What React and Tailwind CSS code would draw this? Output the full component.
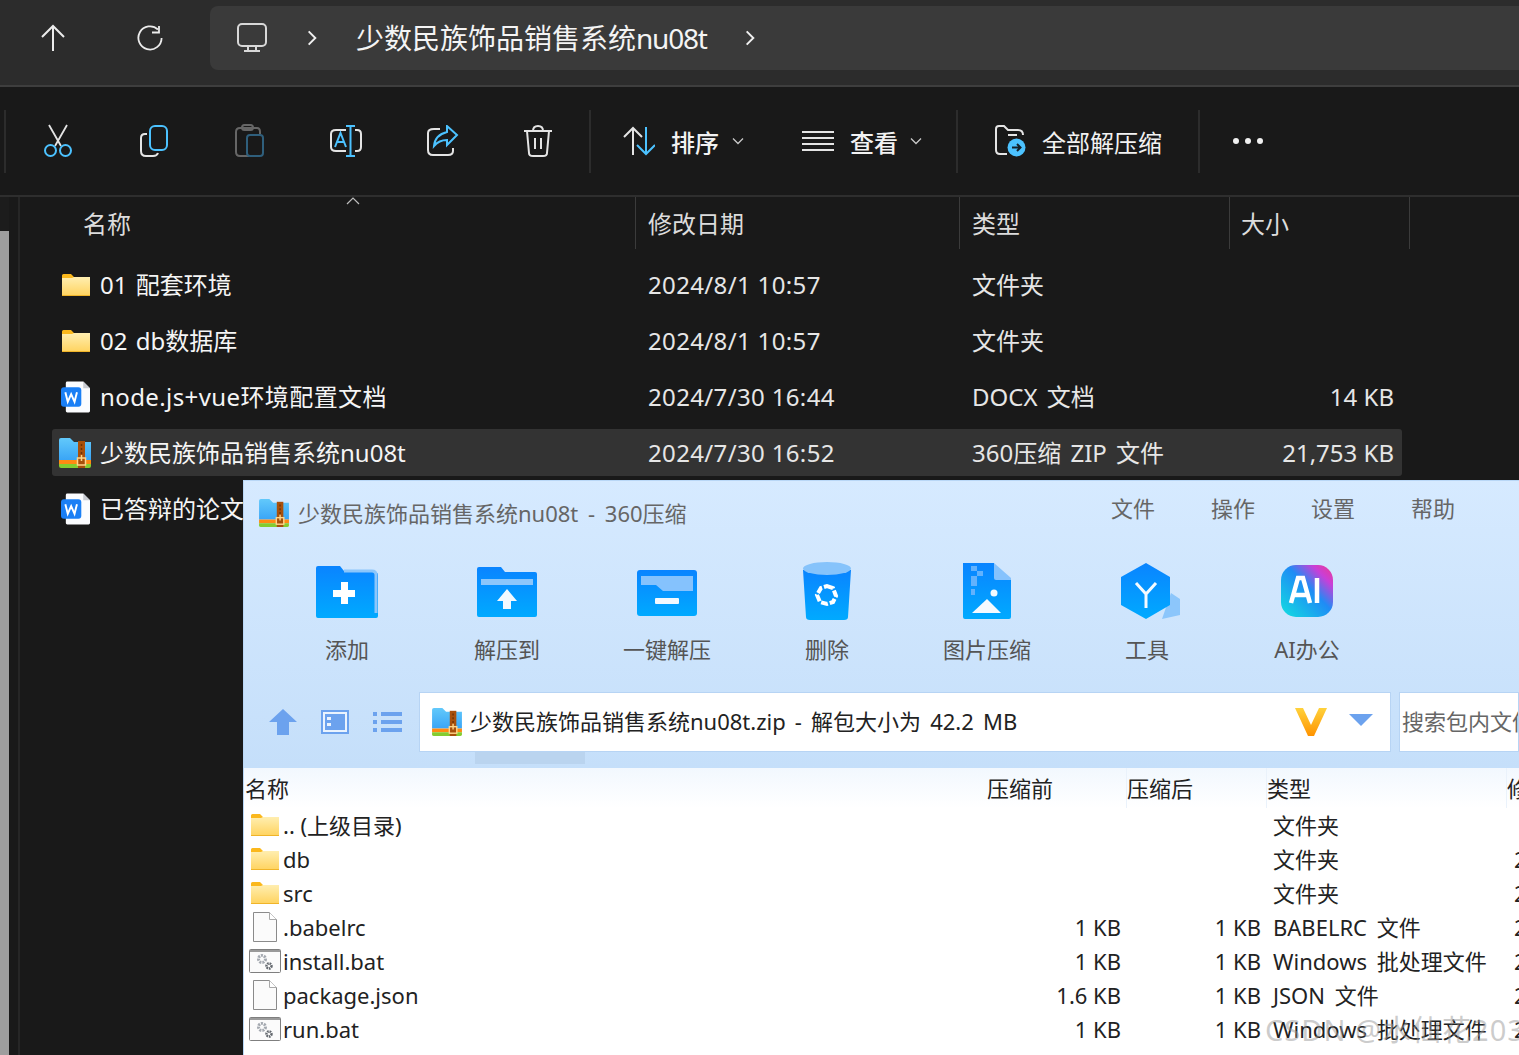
import React from 'react';

const FONT = "font-['Noto_Sans','Noto_Sans_CJK_SC',sans-serif]";
const BLUE = '#4cc2ff';
const GREY = '#e4e4e4';

const darkRows = [
  { icon: 'folder', name: '01 配套环境', date: '2024/8/1 10:57', type: '文件夹', size: '' },
  { icon: 'folder', name: '02 db数据库', date: '2024/8/1 10:57', type: '文件夹', size: '' },
  { icon: 'word', name: 'node.js+vue环境配置文档', date: '2024/7/30 16:44', type: 'DOCX 文档', size: '14 KB', nameClass: 'tracking-[0.4px]' },
  { icon: 'zip', name: '少数民族饰品销售系统nu08t', date: '2024/7/30 16:52', type: '360压缩 ZIP 文件', size: '21,753 KB', selected: true },
  { icon: 'word', name: '已答辩的论文', date: '', type: '', size: '' },
];

const zipRows = [
  { icon: 'folder', name: '.. (上级目录)', before: '', after: '', type: '文件夹', date: '' },
  { icon: 'folder', name: 'db', before: '', after: '', type: '文件夹', date: '2024/7/30' },
  { icon: 'folder', name: 'src', before: '', after: '', type: '文件夹', date: '2024/7/30' },
  { icon: 'file', name: '.babelrc', before: '1 KB', after: '1 KB', type: 'BABELRC 文件', date: '2024/7/30' },
  { icon: 'bat', name: 'install.bat', before: '1 KB', after: '1 KB', type: 'Windows 批处理文件', date: '2024/7/30' },
  { icon: 'file', name: 'package.json', before: '1.6 KB', after: '1 KB', type: 'JSON 文件', date: '2024/7/30' },
  { icon: 'bat', name: 'run.bat', before: '1 KB', after: '1 KB', type: 'Windows 批处理文件', date: '2024/7/30' },
];

function FolderIcon({ className }) {
  return (
    <svg viewBox="0 0 28 22" className={className}>
      <defs>
        <linearGradient id="fold" x1="0" y1="0" x2="0" y2="1">
          <stop offset="0" stopColor="#ffeeb0" />
          <stop offset="1" stopColor="#ffd35e" />
        </linearGradient>
      </defs>
      <path d="M0 1.500Q0 0 1.500 0H9l3 3h16v6H0z" fill="#fbb81c" />
      <path d="M0 4h10l2-1h16v18q0 1-1 1H1q-1 0-1-1z" fill="url(#fold)" />
      <rect y="21" width="28" height="1" fill="#f0b429" />
    </svg>
  );
}

function WordIcon({ className }) {
  return (
    <svg viewBox="0 0 30 32" className={className}>
      <path d="M5 1.500Q5 0 6.500 0H23l7 7v23.500q0 1.500-1.500 1.500h-22Q5 32 5 30.500z" fill="#fbfcfe" />
      <path d="M23 0l7 7h-7z" fill="#c9ccd2" />
      <rect y="6" width="21" height="20" rx="3" fill="#1a7ff5" />
      <path d="M4.500 11l2.500 10 3.500-8 3.500 8 2.500-10" fill="none" stroke="#fff" strokeWidth="2" />
    </svg>
  );
}

function ZipIcon({ className }) {
  return (
    <svg viewBox="0 0 32 30" className={className}>
      <defs>
        <linearGradient id="zipb" x1="0" y1="0" x2="0" y2="1">
          <stop offset="0" stopColor="#62c9fb" />
          <stop offset="1" stopColor="#3aa5f6" />
        </linearGradient>
      </defs>
      <path d="M0 2q0-2 2-2h9l4 4h17v18H0z" fill="url(#zipb)" />
      <rect y="22" width="32" height="4" fill="#ff8a12" />
      <path d="M0 26h32v2q0 2-2 2H2q-2 0-2-2z" fill="#84cc30" />
      <rect x="19" y="3" width="7" height="27" fill="#a8500b" />
      <path d="M22.500 6v12" stroke="#6e3206" strokeWidth="1.500" strokeDasharray="2 2" />
      <rect x="18.500" y="20" width="8" height="7" fill="none" stroke="#ffd58a" strokeWidth="1.500" />
      <path d="M22.500 17v6" stroke="#ffd58a" strokeWidth="1.500" />
    </svg>
  );
}

function FileIcon({ className }) {
  return (
    <svg viewBox="0 0 24 30" className={className}>
      <path d="M.5.5h16l7 7v22H.5z" fill="#fbfbfb" stroke="#8b8b8b" />
      <path d="M16.500.5v7h7" fill="#fff" stroke="#a9a9a9" />
    </svg>
  );
}

function BatIcon({ className }) {
  return (
    <svg viewBox="0 0 32 24" className={className}>
      <rect x=".5" y=".5" width="31" height="23" rx="1" fill="#fbfbfb" stroke="#7f7f7f" />
      <rect x="1" y="1" width="30" height="2" fill="#9a9a9a" />
      <circle cx="13" cy="10" r="3.500" fill="none" stroke="#a4a9b0" strokeWidth="3" strokeDasharray="2 1" />
      <circle cx="20" cy="17" r="2.500" fill="none" stroke="#62676d" strokeWidth="2.500" strokeDasharray="1.600 .8" />
    </svg>
  );
}

function RowIcon({ kind, className }) {
  if (kind === 'folder') return <FolderIcon className={className} />;
  if (kind === 'word') return <WordIcon className={className} />;
  if (kind === 'zip') return <ZipIcon className={className} />;
  if (kind === 'bat') return <BatIcon className={className} />;
  return <FileIcon className={className} />;
}

function Chevron({ className }) {
  return (
    <svg viewBox="0 0 12 20" className={className} fill="none" stroke="#f0f0f0" strokeWidth="2.300">
      <path d="M2 2l8 8-8 8" />
    </svg>
  );
}

function Caret() {
  return (
    <svg viewBox="0 0 12 8" className="w-[12px] h-[8px]" fill="none" stroke="#c8c8c8" strokeWidth="1.300">
      <path d="M1 1.500l5 5 5-5" />
    </svg>
  );
}

function Sep() {
  return <div className="w-[2px] h-[63px] bg-[#2c2c2c] shrink-0" />;
}

function ToolBtn({ children }) {
  return <div className="w-[96px] flex items-center justify-center shrink-0">{children}</div>;
}

function TopBar() {
  return (
    <div className="h-[87px] bg-[#2c2c2c] border-b-2 border-[#3e3e3e] flex items-start shrink-0">
      <div className="w-[210px] h-[76px] flex items-center shrink-0">
        <div className="w-[106px] flex justify-center">
          <svg width="26" height="28" viewBox="0 0 26 28" fill="none" stroke="#ececec" strokeWidth="2">
            <path d="M13 27V2M2 13L13 2l11 11" />
          </svg>
        </div>
        <div className="w-[88px] flex justify-center">
          <svg width="26" height="26" viewBox="0 0 26 26" fill="none" stroke="#ececec" strokeWidth="1.800">
            <path d="M21 4.500A11.600 11.600 0 1 0 24.600 13" />
            <path d="M22 1v6.500h-7" />
          </svg>
        </div>
      </div>
      <div className="mt-[6px] h-[64px] flex-1 bg-[#3a3a3a] rounded-l-lg flex items-center pl-[27px] min-w-0">
        <svg width="30" height="30" viewBox="0 0 30 30" fill="none" stroke="#d8d8d8" strokeWidth="2" className="shrink-0">
          <rect x="1" y="1" width="28" height="22" rx="4" />
          <path d="M11 23v4M19 23v4M7 28h16" />
        </svg>
        <Chevron className="w-[10px] h-[18px] ml-[40px] shrink-0" />
        <span className="ml-[39px] text-[28px] leading-none text-[#f4f4f4] whitespace-nowrap">
          少数民族饰品销售系统<span className="tracking-[-1.200px]">nu08t</span>
        </span>
        <Chevron className="w-[10px] h-[18px] ml-[38px] shrink-0" />
      </div>
    </div>
  );
}

function Toolbar() {
  return (
    <div className="h-[108px] bg-[#191919] flex items-center pl-[4px] shrink-0">
      <Sep />
      <div className="flex ml-[4px]">
        <ToolBtn>
          <svg width="30" height="34" viewBox="0 0 30 34" fill="none">
            <path d="M6 1l12 21M24 1L12 22" stroke={GREY} strokeWidth="1.800" />
            <circle cx="7.500" cy="26.500" r="5.500" stroke={BLUE} strokeWidth="2" />
            <circle cx="22.500" cy="26.500" r="5.500" stroke={BLUE} strokeWidth="2" />
          </svg>
        </ToolBtn>
        <ToolBtn>
          <svg width="30" height="32" viewBox="0 0 30 32" fill="none" strokeWidth="2">
            <path d="M8 9H6Q2 9 2 13v13q0 5 5 5h7q4 0 5-3" stroke={GREY} />
            <rect x="11" y="1" width="17" height="24" rx="5" stroke={BLUE} />
          </svg>
        </ToolBtn>
        <ToolBtn>
          <svg width="30" height="34" viewBox="0 0 30 34" fill="none" strokeWidth="2">
            <path d="M14 32H5q-4 0-4-4V8q0-4 4-4h17q3 0 3 4v2" stroke="#666" />
            <rect x="7" y="1" width="11" height="5" rx="2.500" stroke="#666" />
            <rect x="12" y="11" width="16" height="21" rx="3" stroke="#2f5f7c" />
          </svg>
        </ToolBtn>
        <ToolBtn>
          <svg width="32" height="32" viewBox="0 0 32 32" fill="none" strokeWidth="2">
            <path d="M16 5H6Q1 5 1 9v13q0 4 5 4h10M25 5h2q4 0 4 4v13q0 4-4 4h-2" stroke={GREY} />
            <path d="M5 22L10.500 8 16 22M7 17h7" stroke={BLUE} />
            <path d="M20.500 1v30M16 1h9M16 31h9" stroke={BLUE} />
          </svg>
        </ToolBtn>
        <ToolBtn>
          <svg width="32" height="32" viewBox="0 0 32 32" fill="none" strokeWidth="2" className="ml-[2px]">
            <path d="M13 4H7Q1 4 1 8v17q0 5 5 5h15q5 0 5-4v-3" stroke={GREY} />
            <path d="M20 1l10 9-10 10v-5q-8 0-13 6 1-11 13-14z" stroke={BLUE} />
          </svg>
        </ToolBtn>
        <ToolBtn>
          <svg width="30" height="32" viewBox="0 0 30 32" fill="none" stroke={GREY} strokeWidth="2">
            <path d="M1 6h28M4 6l2 22q0 3 4 3h10q4 0 4-3l2-22M10 6q0-5 5-5t5 5M12 13v11M18 13v11" />
          </svg>
        </ToolBtn>
      </div>
      <div className="ml-[3px]"><Sep /></div>
      <div className="flex items-center ml-[32px]">
        <svg width="32" height="30" viewBox="0 0 32 30" fill="none" strokeWidth="2">
          <path d="M10 29V2M1 11l9-9 9 9" stroke={GREY} />
          <path d="M23 1v27M14 19l9 9 9-9" stroke={BLUE} />
        </svg>
        <span className="ml-[16px] pt-[3px] text-[24px] leading-none text-[#f2f2f2] font-medium">排序</span>
        <div className="ml-[13px]"><Caret /></div>
      </div>
      <div className="flex items-center ml-[58px]">
        <svg width="32" height="20" viewBox="0 0 32 20" fill="none" stroke={GREY} strokeWidth="2">
          <path d="M0 1h32M0 7h32M0 13h32M0 19h32" />
        </svg>
        <span className="ml-[16px] pt-[3px] text-[24px] leading-none text-[#f2f2f2] font-medium">查看</span>
        <div className="ml-[12px]"><Caret /></div>
      </div>
      <div className="ml-[34px]"><Sep /></div>
      <div className="flex items-center ml-[36px]">
        <svg width="32" height="32" viewBox="0 0 32 32" fill="none" className="shrink-0">
          <path d="M13 29H6q-4 0-4-4V4q0-3 3-3h5l4 4h10q5 0 5 5" stroke={GREY} strokeWidth="2" />
          <path d="M14 10h9" stroke={GREY} strokeWidth="2" />
          <circle cx="22.500" cy="22.500" r="9" fill={BLUE} />
          <path d="M18 22.500h8M23 19l3.500 3.500L23 26" stroke="#14202a" strokeWidth="2" />
        </svg>
        <span className="ml-[16px] pt-[3px] text-[24px] leading-none text-[#f2f2f2] whitespace-nowrap">全部解压缩</span>
      </div>
      <div className="ml-[36px]"><Sep /></div>
      <div className="flex gap-[6px] ml-[33px]">
        <div className="w-[6px] h-[6px] rounded-full bg-[#f0f0f0]" />
        <div className="w-[6px] h-[6px] rounded-full bg-[#f0f0f0]" />
        <div className="w-[6px] h-[6px] rounded-full bg-[#f0f0f0]" />
      </div>
    </div>
  );
}

function ExplorerList() {
  return (
    <div className="flex flex-1 bg-[#191919] border-t-2 border-[#2e2e2e] min-h-0">
      <div className="w-[9px] flex flex-col shrink-0">
        <div className="h-[34px] bg-[#1c1c1c]" />
        <div className="flex-1 bg-[#9e9e9e]" />
      </div>
      <div className="w-[11px] bg-[#191919] border-r-2 border-[#262626] shrink-0" />
      <div className="flex-1 min-w-0">
        <div className="h-[56px] flex text-[24px] text-[#dcdcdc] relative">
          <div className="w-[616px] pl-[63px] pt-[10px] border-r border-[#3b3b3b] leading-[34px] h-[52px]">名称</div>
          <svg width="14" height="8" viewBox="0 0 14 8" fill="none" stroke="#bdbdbd" strokeWidth="1.200" className="absolute left-[326px] top-[0px]">
            <path d="M1 7l6-6 6 6" />
          </svg>
          <div className="w-[324px] pl-[12px] pt-[10px] border-r border-[#3b3b3b] leading-[34px] h-[52px]">修改日期</div>
          <div className="w-[270px] pl-[12px] pt-[10px] border-r border-[#3b3b3b] leading-[34px] h-[52px]">类型</div>
          <div className="w-[180px] pl-[11px] pt-[10px] border-r border-[#3b3b3b] leading-[34px] h-[52px]">大小</div>
        </div>
        <div className="ml-[32px] w-[1350px] pt-[4px]">
          {darkRows.map((row) => (
            <div key={row.name} className="h-[56px] flex items-center">
              <div className={`w-full h-[47px] mb-[1px] pt-[1px] flex items-center rounded-[3px] text-[24px] leading-none text-[#f5f5f5] ${row.selected ? 'bg-[#333333]' : ''}`}>
                <div className="w-[48px] flex justify-center shrink-0">
                  <RowIcon
                    kind={row.icon}
                    className={row.icon === 'folder' ? 'w-[28px] h-[22px]' : row.icon === 'word' ? 'w-[29px] h-[32px] -ml-[1px]' : 'w-[32px] h-[30px] -ml-[3px]'}
                  />
                </div>
                <div className={`w-[548px] whitespace-nowrap shrink-0 [word-spacing:2px] ${row.nameClass || ''}`}>{row.name}</div>
                <div className="w-[324px] text-[#e6e6e6] shrink-0 whitespace-nowrap tracking-[0.35px]">{row.date}</div>
                <div className="w-[250px] text-[#e6e6e6] shrink-0 whitespace-nowrap [word-spacing:3px]">{row.type}</div>
                <div className="w-[172px] text-right text-[#e6e6e6] shrink-0 whitespace-nowrap">{row.size}</div>
              </div>
            </div>
          ))}
        </div>
      </div>
    </div>
  );
}

function AddIcon() {
  return (
    <svg width="62" height="52" viewBox="0 0 62 52" className="mt-[2px]">
      <defs>
        <linearGradient id="blue" x1="0" y1="0" x2="0" y2="1">
          <stop offset="0" stopColor="#0a84ff" />
          <stop offset="1" stopColor="#00aaff" />
        </linearGradient>
      </defs>
      <path d="M2 0h22l4 5h29q5 0 5 5v40q0 2-2 2H2q-2 0-2-2V2q0-2 2-2z" fill="url(#blue)" />
      <path d="M28 5h28q4 0 4 4v38" fill="none" stroke="#8cc6fb" strokeWidth="3" />
      <path d="M26 18h7v8h7v7h-7v7h-7v-7h-8v-7h8z" transform="translate(-1 -2)" fill="#fff" />
    </svg>
  );
}

function UnpackIcon() {
  return (
    <svg width="60" height="50" viewBox="0 0 60 50" className="mt-[2px]">
      <path d="M2 0h22l4 5h30q2 0 2 2v41q0 2-2 2H2q-2 0-2-2V2q0-2 2-2z" fill="url(#blue)" />
      <rect x="4" y="12" width="52" height="6" fill="#8cc6fb" />
      <path d="M30 22l10 12h-6v8H26v-8h-6z" fill="#f2f9ff" />
    </svg>
  );
}

function OneKeyIcon() {
  return (
    <svg width="60" height="46" viewBox="0 0 60 46" className="mt-[4px]">
      <rect width="60" height="46" rx="3" fill="url(#blue)" />
      <path d="M4 6h52v15H26l-7-6H4z" fill="#85c2fd" />
      <rect x="18" y="28" width="24" height="6" rx="1" fill="#f2f9ff" />
    </svg>
  );
}

function BinIcon() {
  return (
    <svg width="48" height="58" viewBox="0 0 48 58">
      <path d="M0 8h48l-3 47q0 3-4 3H7q-4 0-4-3z" fill="url(#blue)" />
      <ellipse cx="24" cy="6.500" rx="24" ry="6.500" fill="#86c3fb" />
      <path d="M24 24l6 2 3 8-3 6-6 2-7-2-3-7 4-7z" fill="none" stroke="#fff" strokeWidth="4" strokeDasharray="7 2" />
    </svg>
  );
}

function PictureIcon() {
  return (
    <svg width="48" height="56" viewBox="0 0 48 56">
      <path d="M0 0h31v15h17v39q0 2-2 2H2q-2 0-2-2z" fill="url(#blue)" />
      <path d="M31 0l17 15v2H33q-2 0-2-2z" fill="#85c2fd" />
      <path d="M8 3h6v5H8zM14 8h6v5h-6zM8 13h6v5H8zM14 18h-6v5h6zM8 26h4v6H8z" fill="#62b2fd" />
      <path d="M24 36l14 14H9z" fill="#f4faff" />
      <circle cx="31" cy="30" r="3.500" fill="#f4faff" />
    </svg>
  );
}

function ToolsIcon() {
  return (
    <svg width="60" height="56" viewBox="0 0 60 56" className="ml-[8px]">
      <path d="M50 30l9 6v16l-18 4z" fill="#8cc6fb" />
      <path d="M25 0l24 14v28L25 56 0 42V14z" fill="url(#blue)" />
      <path d="M15 20l10 11 10-11M25 31v14" fill="none" stroke="#f4faff" strokeWidth="3" />
    </svg>
  );
}

function AiIcon() {
  return (
    <svg width="52" height="52" viewBox="0 0 52 52">
      <defs>
        <linearGradient id="aig" x1="0" y1="1" x2="1" y2="0">
          <stop offset="0" stopColor="#12e0e0" />
          <stop offset=".55" stopColor="#1f8cf5" />
          <stop offset=".8" stopColor="#c83fd8" />
          <stop offset="1" stopColor="#f03a8c" />
        </linearGradient>
      </defs>
      <rect width="52" height="52" rx="15" fill="url(#aig)" />
      <path d="M10 38l7-25h5l7 25M13 30h13M36 13v25" fill="none" stroke="#fff" strokeWidth="4.500" />
    </svg>
  );
}

const zipTools = [
  { label: '添加', icon: <AddIcon /> },
  { label: '解压到', icon: <UnpackIcon /> },
  { label: '一键解压', icon: <OneKeyIcon /> },
  { label: '删除', icon: <BinIcon /> },
  { label: '图片压缩', icon: <PictureIcon /> },
  { label: '工具', icon: <ToolsIcon /> },
  { label: 'AI办公', icon: <AiIcon /> },
];

function ZipWindow() {
  return (
    <div className="absolute left-[243px] top-[480px] w-[1276px] h-[575px] flex flex-col border-l border-t border-[#b9d7f6]">
      <div className="h-[287px] shrink-0 bg-gradient-to-b from-[#d6eaff] to-[#c5dffa] relative">
        <div className="h-[66px] flex pl-[14px] pr-[64px]">
          <ZipIcon className="w-[32px] h-[28px] mt-[18px] shrink-0" />
          <span className="ml-[8px] mt-[17px] text-[22px] leading-[30px] text-[#666666] whitespace-nowrap [word-spacing:4px]">少数民族饰品销售系统nu08t - 360压缩</span>
          <div className="ml-auto flex gap-[56px] mt-[12px] text-[22px] leading-[30px] text-[#666666]">
            <span>文件</span>
            <span>操作</span>
            <span>设置</span>
            <span>帮助</span>
          </div>
        </div>
        <div className="flex pl-[23px]">
          {zipTools.map((tool) => (
            <div key={tool.label} className="w-[160px] flex flex-col items-center shrink-0">
              <div className="h-[74px] flex items-center justify-center pt-[14px]">{tool.icon}</div>
              <span className="mt-[13px] text-[22px] leading-[30px] text-[#555555] whitespace-nowrap">{tool.label}</span>
            </div>
          ))}
        </div>
        <div className="mt-[28px] flex items-center h-[60px]">
          <div className="w-[175px] flex items-center shrink-0 pl-[25px]">
            <svg width="28" height="26" viewBox="0 0 28 26">
              <path d="M14 0l14 13h-8v13H8V13H0z" fill="#6ca2ee" />
            </svg>
            <svg width="28" height="24" viewBox="0 0 28 24" fill="none" className="ml-[24px]">
              <rect x="1" y="1" width="26" height="22" stroke="#6ca2ee" strokeWidth="2" fill="#eaf3fe" />
              <rect x="4" y="4" width="20" height="16" fill="#6ca2ee" />
              <rect x="6" y="7" width="4" height="3" fill="#eaf3fe" />
              <rect x="6" y="13" width="4" height="3" fill="#eaf3fe" />
            </svg>
            <svg width="29" height="22" viewBox="0 0 29 22" className="ml-[24px]" fill="#6ca2ee">
              <path d="M0 1h4v4H0zM8 1h21v4H8zM0 9h4v4H0zM8 9h21v4H8zM0 17h4v4H0zM8 17h21v4H8z" />
            </svg>
          </div>
          <div className="w-[972px] h-[60px] bg-white border border-[#b7d4f4] flex items-center pl-[11px] pr-[17px] shrink-0">
            <ZipIcon className="w-[32px] h-[28px] shrink-0" />
            <span className="ml-[7px] pb-[2px] text-[22px] leading-none text-[#222222] whitespace-nowrap [word-spacing:3.400px]">少数民族饰品销售系统nu08t.zip - 解包大小为 42.2 MB</span>
            <svg width="32" height="28" viewBox="0 0 32 28" className="ml-auto">
              <defs>
                <linearGradient id="vip" x1="0" y1="0" x2="0" y2="1">
                  <stop offset="0" stopColor="#ffd23c" />
                  <stop offset="1" stopColor="#ff9300" />
                </linearGradient>
              </defs>
              <path d="M0 0h8l8 17 8-17h8L19 28h-6z" fill="url(#vip)" />
            </svg>
            <svg width="24" height="12" viewBox="0 0 24 12" className="ml-[22px] -mt-[4px]">
              <path d="M0 0h24L12 12z" fill="#6ca2ee" />
            </svg>
          </div>
          <div className="ml-[8px] flex-1 h-[60px] bg-white border border-[#b7d4f4] flex items-center pl-[2px] overflow-hidden">
            <span className="text-[22px] pb-[2px] leading-none text-[#666666] whitespace-nowrap">搜索包内文件</span>
          </div>
        </div>
        <div className="absolute left-[231px] top-[271px] w-[110px] h-[12px] bg-[#bad4ef]" />
      </div>
      <div className="flex-1 bg-white min-h-0 overflow-hidden">
        <div className="h-[40px] bg-gradient-to-b from-[#f2f8fe] to-white flex text-[22px] leading-[40px] text-[#222222] whitespace-nowrap">
          <div className="w-[743px] pl-[1px] shrink-0">名称</div>
          <div className="w-[139px] shrink-0">压缩前</div>
          <div className="w-[140px] shrink-0 border-l border-[#eaf2fb]">压缩后</div>
          <div className="w-[240px] shrink-0 border-l border-[#eaf2fb]">类型</div>
          <div className="flex-1 border-l border-[#eaf2fb] overflow-hidden">修改时间</div>
        </div>
        <div>
          {zipRows.map((row) => (
            <div key={row.name} className="h-[34px] flex items-center text-[22px] leading-none text-[#222222] whitespace-nowrap">
              <div className="w-[39px] flex justify-center shrink-0 pl-[3px]">
                <RowIcon
                  kind={row.icon}
                  className={row.icon === 'folder' ? 'w-[28px] h-[22px]' : row.icon === 'bat' ? 'w-[32px] h-[24px]' : 'w-[24px] h-[30px]'}
                />
              </div>
              <div className="w-[704px] shrink-0">{row.name}</div>
              <div className="w-[134px] text-right shrink-0">{row.before}</div>
              <div className="w-[140px] text-right shrink-0">{row.after}</div>
              <div className="w-[241px] ml-[12px] shrink-0 [word-spacing:4px]">{row.type}</div>
              <div className="shrink-0">{row.date}</div>
            </div>
          ))}
        </div>
      </div>
    </div>
  );
}

export default function App() {
  return (
    <div className={`relative w-[1519px] h-[1055px] overflow-hidden flex flex-col bg-[#191919] ${FONT}`}>
      <TopBar />
      <Toolbar />
      <ExplorerList />
      <ZipWindow />
      <div className="absolute left-[1265px] top-[1012px] text-[29px] leading-[36px] tracking-[1px] text-[#9a9a9a]/50 whitespace-nowrap">CSDN @水仙花2032</div>
    </div>
  );
}
